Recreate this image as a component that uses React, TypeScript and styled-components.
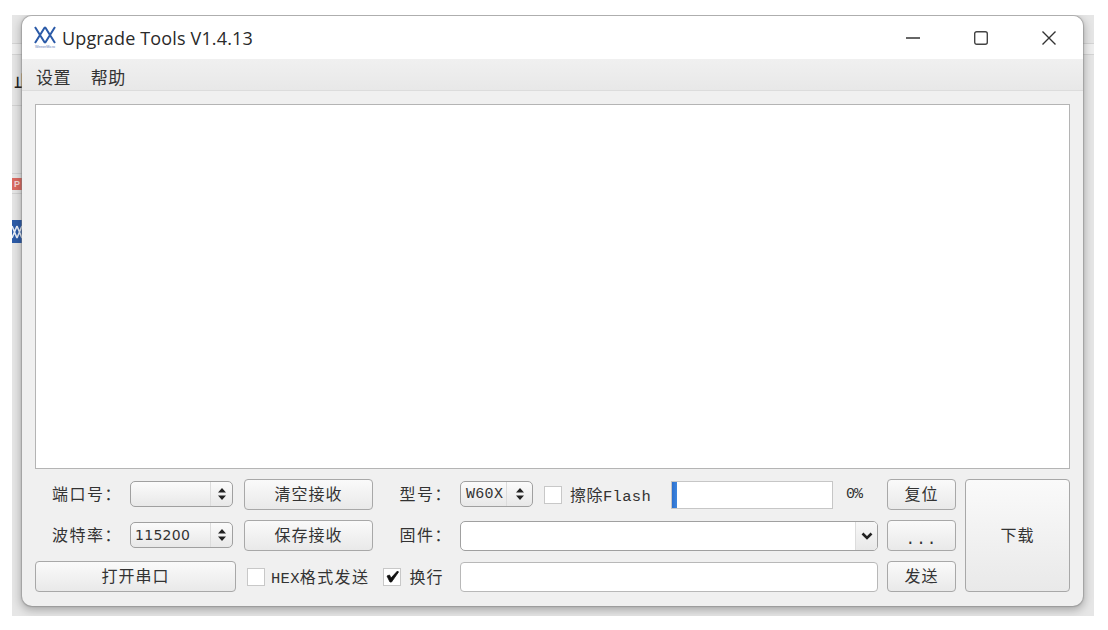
import styled, { createGlobalStyle } from "styled-components";

const Global = createGlobalStyle`
  html, body { margin: 0; padding: 0; background: #fff; }
  body { font-family: "Noto Sans CJK SC", "Liberation Sans", sans-serif; color: #2b2b2b; }
`;

const Page = styled.div`
  width: 1108px;
  height: 630px;
  padding: 15px 14px 14px 12px;
  box-sizing: border-box;
  overflow: hidden;
`;

const Desktop = styled.div`
  display: flex;
  height: 601px;
  overflow: hidden;
  background: #e6e6e6;
`;

const LeftStrip = styled.div`
  width: 10px;
  flex: none;
  display: flex;
  flex-direction: column;
  padding-top: 28px;
  overflow: hidden;
`;

const RightStrip = styled.div`
  width: 11px;
  flex: none;
  padding-top: 28px;
`;

const StripBand = styled.div`
  height: 12px;
  box-sizing: border-box;
  background: #efefef;
  border-top: 1px solid #d4d4d4;
  border-bottom: 1px solid #d4d4d4;
`;

const StripRule = styled.div<{ $top: number }>`
  height: 1px;
  flex: none;
  margin-top: ${(p) => p.$top}px;
  background: #d2d2d2;
`;

const StripGlyph = styled.div`
  margin-top: 15px;
  margin-left: 2px;
  font-size: 16px;
  font-weight: 500;
  line-height: 20px;
  width: 8px;
  overflow: hidden;
  white-space: nowrap;
  color: #222;
`;

const RedTile = styled.div`
  margin-top: 4px;
  height: 12px;
  flex: none;
  background: #dc6a62;
  color: #f6d9d6;
  font: bold 9px/12px "Liberation Sans", sans-serif;
  text-align: center;
`;

const BlueTile = styled.div`
  margin-top: 26px;
  height: 23px;
  flex: none;
  background: #2c5ba8;
  display: flex;
  align-items: center;
  justify-content: center;
`;

const Window = styled.div`
  flex: 1;
  margin: 1px 0 10px;
  display: flex;
  flex-direction: column;
  background: #f0f0f0;
  border-radius: 10px;
  overflow: hidden;
  position: relative;
  box-shadow: 0 0 1px 1px rgba(130, 130, 130, 0.5), 0 3px 10px 1px rgba(0, 0, 0, 0.28);
`;

const TitleBar = styled.div`
  height: 43px;
  flex: none;
  background: #fff;
  display: flex;
  align-items: center;
  padding-left: 11px;
`;

const Logo = styled.svg`
  width: 24px;
  height: 30px;
  flex: none;
  margin-top: 1px;
`;

const Title = styled.div`
  margin-left: 5px;
  font: 18px/24px "Open Sans", sans-serif;
  letter-spacing: 0.15px;
  color: #2a2a2a;
  flex: 1;
`;

const WinButton = styled.div`
  width: 68px;
  height: 43px;
  display: flex;
  align-items: center;
  justify-content: center;
`;

const MenuBar = styled.div`
  height: 32px;
  flex: none;
  box-sizing: border-box;
  display: flex;
  align-items: center;
  gap: 20px;
  padding: 3px 0 0 14px;
  background: linear-gradient(#f0f0f0, #e8e8e8);
  border-bottom: 1px solid #dcdcdc;
  font-size: 17px;
  letter-spacing: 0.4px;
  color: #333;
`;

const Body = styled.div`
  flex: 1;
  display: flex;
  flex-direction: column;
  padding: 13px 13px 14px;
  gap: 10px;
`;

const Log = styled.div`
  height: 363px;
  flex: none;
  background: #fff;
  border: 1px solid #b4b4b4;
`;

const Controls = styled.div`
  display: grid;
  grid-template-columns: 95px 106px 8px 129px 87px 73px 345px 9px 69px 9px 105px;
  grid-template-rows: repeat(3, 31px);
  row-gap: 10px;
  align-items: center;
`;

const Label = styled.div<{ $col: number }>`
  grid-column: ${(p) => p.$col};
  font-size: 16px;
  line-height: 22px;
  letter-spacing: 1.5px;
  white-space: nowrap;
  text-align: right;
  padding: 0 8px 4px 0;
  color: #333;
`;

const Button = styled.button<{ $col: string; $row: string }>`
  grid-column: ${(p) => p.$col};
  grid-row: ${(p) => p.$row};
  height: 100%;
  padding: 0 0 3px;
  background: linear-gradient(#fafafa, #e9e9e9);
  border: 1px solid #a8a8a8;
  border-radius: 4px;
  font-family: inherit;
  font-size: 16px;
  letter-spacing: 1px;
  color: #333;
`;

const Dots = styled.span`
  font-family: "Liberation Mono", monospace;
  letter-spacing: 1px;
  position: relative;
  top: 3px;
`;

const Combo = styled.div<{ $col: string; $w?: number }>`
  grid-column: ${(p) => p.$col};
  width: ${(p) => (p.$w ? `${p.$w}px` : "auto")};
  height: 26px;
  box-sizing: border-box;
  align-self: start;
  margin-top: 2px;
  display: flex;
  align-items: center;
  border: 1px solid #a0a0a0;
  border-radius: 5px;
  background: linear-gradient(#fbfbfb, #e8e8e8);
  overflow: hidden;
`;

const ComboText = styled.div<{ $mono?: boolean }>`
  flex: 1;
  padding-left: ${(p) => (p.$mono ? "5px" : "4px")};
  font-family: ${(p) =>
    p.$mono ? '"Liberation Mono", monospace' : '"DejaVu Sans", sans-serif'};
  font-size: ${(p) => (p.$mono ? "15px" : "14px")};
  letter-spacing: 0.3px;
  color: #333;
`;

const ComboArrow = styled.div<{ $w?: number }>`
  width: ${(p) => p.$w ?? 21}px;
  height: 100%;
  flex: none;
  border-left: 1px solid #dcdcdc;
  display: flex;
  align-items: center;
  justify-content: center;
`;

const Inline = styled.div<{ $col: string; $gap: number }>`
  grid-column: ${(p) => p.$col};
  display: flex;
  align-items: center;
  gap: ${(p) => p.$gap}px;
  white-space: nowrap;
`;

const Box = styled.div<{ $left: number }>`
  width: 18px;
  height: 18px;
  flex: none;
  box-sizing: border-box;
  margin-left: ${(p) => p.$left}px;
  background: #fff;
  border: 1px solid #c8c8c8;
  display: flex;
  align-items: center;
  justify-content: center;
`;

const CheckText = styled.span<{ $gap?: number }>`
  font-size: 16px;
  letter-spacing: ${(p) => p.$gap ?? 0.5}px;
  padding-bottom: 2px;
  color: #333;
`;

const Latin = styled.span`
  font-family: "Liberation Mono", monospace;
  font-size: 15.5px;
  letter-spacing: 0.3px;
`;

const Progress = styled.div`
  width: 162px;
  height: 28px;
  flex: none;
  box-sizing: border-box;
  margin-left: 12px;
  background: #fff;
  border: 1px solid #c6c6c6;
`;

const Chunk = styled.div`
  height: 100%;
  background: linear-gradient(90deg, #2a6fcf, #3f86dd);
`;

const Percent = styled.span`
  margin-left: 5px;
  font-family: "Liberation Mono", monospace;
  font-size: 15px;
  letter-spacing: -1px;
  color: #333;
`;

const Field = styled.input<{ $col: string }>`
  grid-column: ${(p) => p.$col};
  height: 30px;
  box-sizing: border-box;
  background: #fff;
  border: 1px solid #b8b8b8;
  border-radius: 4px;
`;

const FirmwareCombo = styled(Combo)`
  height: 30px;
  margin-top: 1px;
  background: #fff;
`;

const FirmwareArrow = styled(ComboArrow)`
  background: linear-gradient(#f8f8f8, #e8e8e8);
`;

const Updown = () => (
  <svg width="10" height="14" viewBox="0 0 10 14">
    <path d="M5 1 L9 5.6 H1 Z M5 13 L1 8.4 H9 Z" fill="#222" />
  </svg>
);

const Down = () => (
  <svg width="12" height="8" viewBox="0 0 12 8">
    <path d="M1.5 1.5 L6 6 L10.5 1.5" fill="none" stroke="#222" strokeWidth="2.6" />
  </svg>
);

export default function App() {
  return (
    <Page>
      <Global />
      <Desktop>
        <LeftStrip>
          <StripBand />
          <StripGlyph>止</StripGlyph>
          <StripRule $top={15} />
          <StripRule $top={67} />
          <RedTile>P</RedTile>
          <StripRule $top={3} />
          <BlueTile>
            <svg width="10" height="16" viewBox="0 0 10 16">
              <path d="M0 2 L5 14 M5 2 L0 14 M5 2 L10 14 M10 2 L5 14" fill="none" stroke="#e8eef8" strokeWidth="1.6" />
            </svg>
          </BlueTile>
        </LeftStrip>
        <Window>
          <TitleBar>
            <Logo viewBox="0 0 24 30">
              <g fill="none" stroke="#2c5ba8" strokeWidth="2">
                <path d="M2 4 L12 20 M12 4 L2 20" />
                <path d="M12 4 L22 20 M22 4 L12 20" />
              </g>
              <text x="12" y="25" fontSize="3.6" fill="#5f7fb8" textAnchor="middle" fontFamily="Liberation Sans">
                WinnerMicro
              </text>
            </Logo>
            <Title>Upgrade Tools V1.4.13</Title>
            <WinButton>
              <svg width="16" height="16" viewBox="0 0 16 16">
                <path d="M1 8 H15" stroke="#333" strokeWidth="1.4" />
              </svg>
            </WinButton>
            <WinButton>
              <svg width="16" height="16" viewBox="0 0 16 16">
                <rect x="1.7" y="1.7" width="12.6" height="12.6" rx="2" fill="none" stroke="#444" strokeWidth="1.4" />
              </svg>
            </WinButton>
            <WinButton>
              <svg width="16" height="16" viewBox="0 0 16 16">
                <path d="M1.5 1.5 L14.5 14.5 M14.5 1.5 L1.5 14.5" stroke="#333" strokeWidth="1.4" />
              </svg>
            </WinButton>
          </TitleBar>
          <MenuBar>
            <span>设置</span>
            <span>帮助</span>
          </MenuBar>
          <Body>
            <Log />
            <Controls>
              <Label $col={1}>端口号：</Label>
              <Combo $col="2" $w={103}>
                <ComboText />
                <ComboArrow>
                  <Updown />
                </ComboArrow>
              </Combo>
              <Button $col="4" $row="1">清空接收</Button>
              <Label $col={5}>型号：</Label>
              <Combo $col="6">
                <ComboText $mono>W60X</ComboText>
                <ComboArrow $w={25}>
                  <Updown />
                </ComboArrow>
              </Combo>
              <Inline $col="7" $gap={8}>
                <Box $left={11} />
                <CheckText>
                  擦除<Latin>Flash</Latin>
                </CheckText>
                <Progress>
                  <Chunk style={{ width: 5 }} />
                </Progress>
                <Percent>0%</Percent>
              </Inline>
              <Button $col="9" $row="1">复位</Button>
              <Button $col="11" $row="1 / span 3">下载</Button>

              <Label $col={1}>波特率：</Label>
              <Combo $col="2" $w={103}>
                <ComboText>115200</ComboText>
                <ComboArrow>
                  <Updown />
                </ComboArrow>
              </Combo>
              <Button $col="4" $row="2">保存接收</Button>
              <Label $col={5}>固件：</Label>
              <FirmwareCombo $col="6 / span 2">
                <ComboText />
                <FirmwareArrow>
                  <Down />
                </FirmwareArrow>
              </FirmwareCombo>
              <Button $col="9" $row="2">
                <Dots>...</Dots>
              </Button>

              <Button $col="1 / span 2" $row="3">打开串口</Button>
              <Inline $col="3 / span 3" $gap={6}>
                <Box $left={11} />
                <CheckText $gap={1.4}>
                  <Latin>HEX</Latin>格式发送
                </CheckText>
                <Box $left={8}>
                  <svg width="15" height="15" viewBox="0 0 15 15">
                    <path d="M2 7 L4.5 6 L6 9 L12.5 2 L13.5 3 L6.5 13 L5 13 Z" fill="#111" stroke="#111" strokeWidth="0.8" />
                  </svg>
                </Box>
                <CheckText $gap={1}>
                  <span style={{ marginLeft: 2 }}>换行</span>
                </CheckText>
              </Inline>
              <Field $col="6 / span 2" />
              <Button $col="9" $row="3">发送</Button>
            </Controls>
          </Body>
        </Window>
        <RightStrip>
          <StripBand />
        </RightStrip>
      </Desktop>
    </Page>
  );
}
